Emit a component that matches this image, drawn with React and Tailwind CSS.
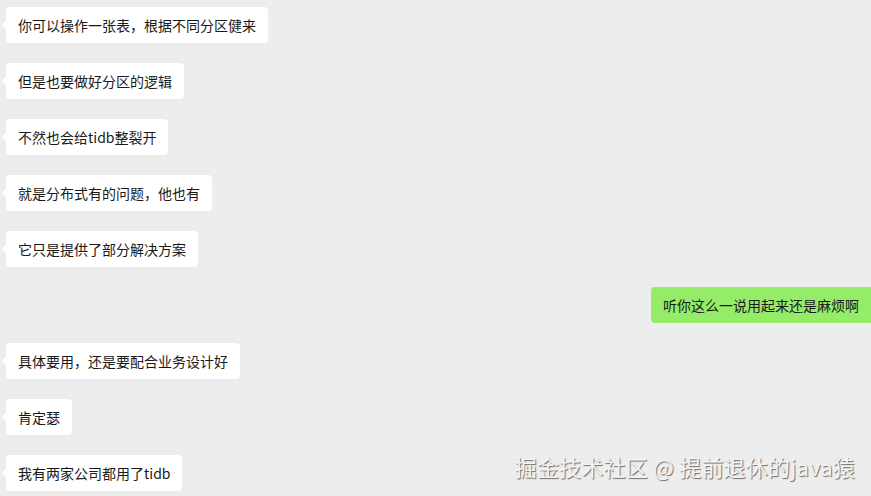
import React from 'react';

const messages = [
  { side: 'left', text: '你可以操作一张表，根据不同分区健来' },
  { side: 'left', text: '但是也要做好分区的逻辑' },
  { side: 'left', text: '不然也会给tidb整裂开' },
  { side: 'left', text: '就是分布式有的问题，他也有' },
  { side: 'left', text: '它只是提供了部分解决方案' },
  { side: 'right', text: '听你这么一说用起来还是麻烦啊' },
  { side: 'left', text: '具体要用，还是要配合业务设计好' },
  { side: 'left', text: '肯定瑟' },
  { side: 'left', text: '我有两家公司都用了tidb' },
];

const Bubble = ({ side, text }) => {
  const mine = side === 'right';
  return (
    <div className={mine ? 'flex justify-end' : 'flex justify-start pl-[6px]'}>
      <div
        className={`relative h-9 flex items-center px-3 text-[14px] text-[#191919] rounded-[4px] ${
          mine ? 'bg-[#95ec69] rounded-r-none' : 'bg-white'
        }`}
      >
        {!mine && (
          <span className="absolute -left-[4px] top-[14px] w-0 h-0 border-y-[4px] border-y-transparent border-r-[4px] border-r-white" />
        )}
        {text}
      </div>
    </div>
  );
};

export default function App() {
  return (
    <div
      className="relative w-[871px] h-[496px] overflow-hidden bg-[#ededed]"
      style={{ fontFamily: '"Noto Sans CJK SC", "Noto Sans", sans-serif' }}
    >
      <div className="flex flex-col gap-5 pt-[7px]">
        {messages.map((m, i) => (
          <Bubble key={i} {...m} />
        ))}
      </div>
      <div className="absolute right-[16px] top-[455px] text-[22px] leading-none tracking-[0.2px] text-[#f4f4f4] [text-shadow:1px_1px_1px_rgba(0,0,0,0.55)]">
        掘金技术社区 @ 提前退休的java猿
      </div>
    </div>
  );
}
